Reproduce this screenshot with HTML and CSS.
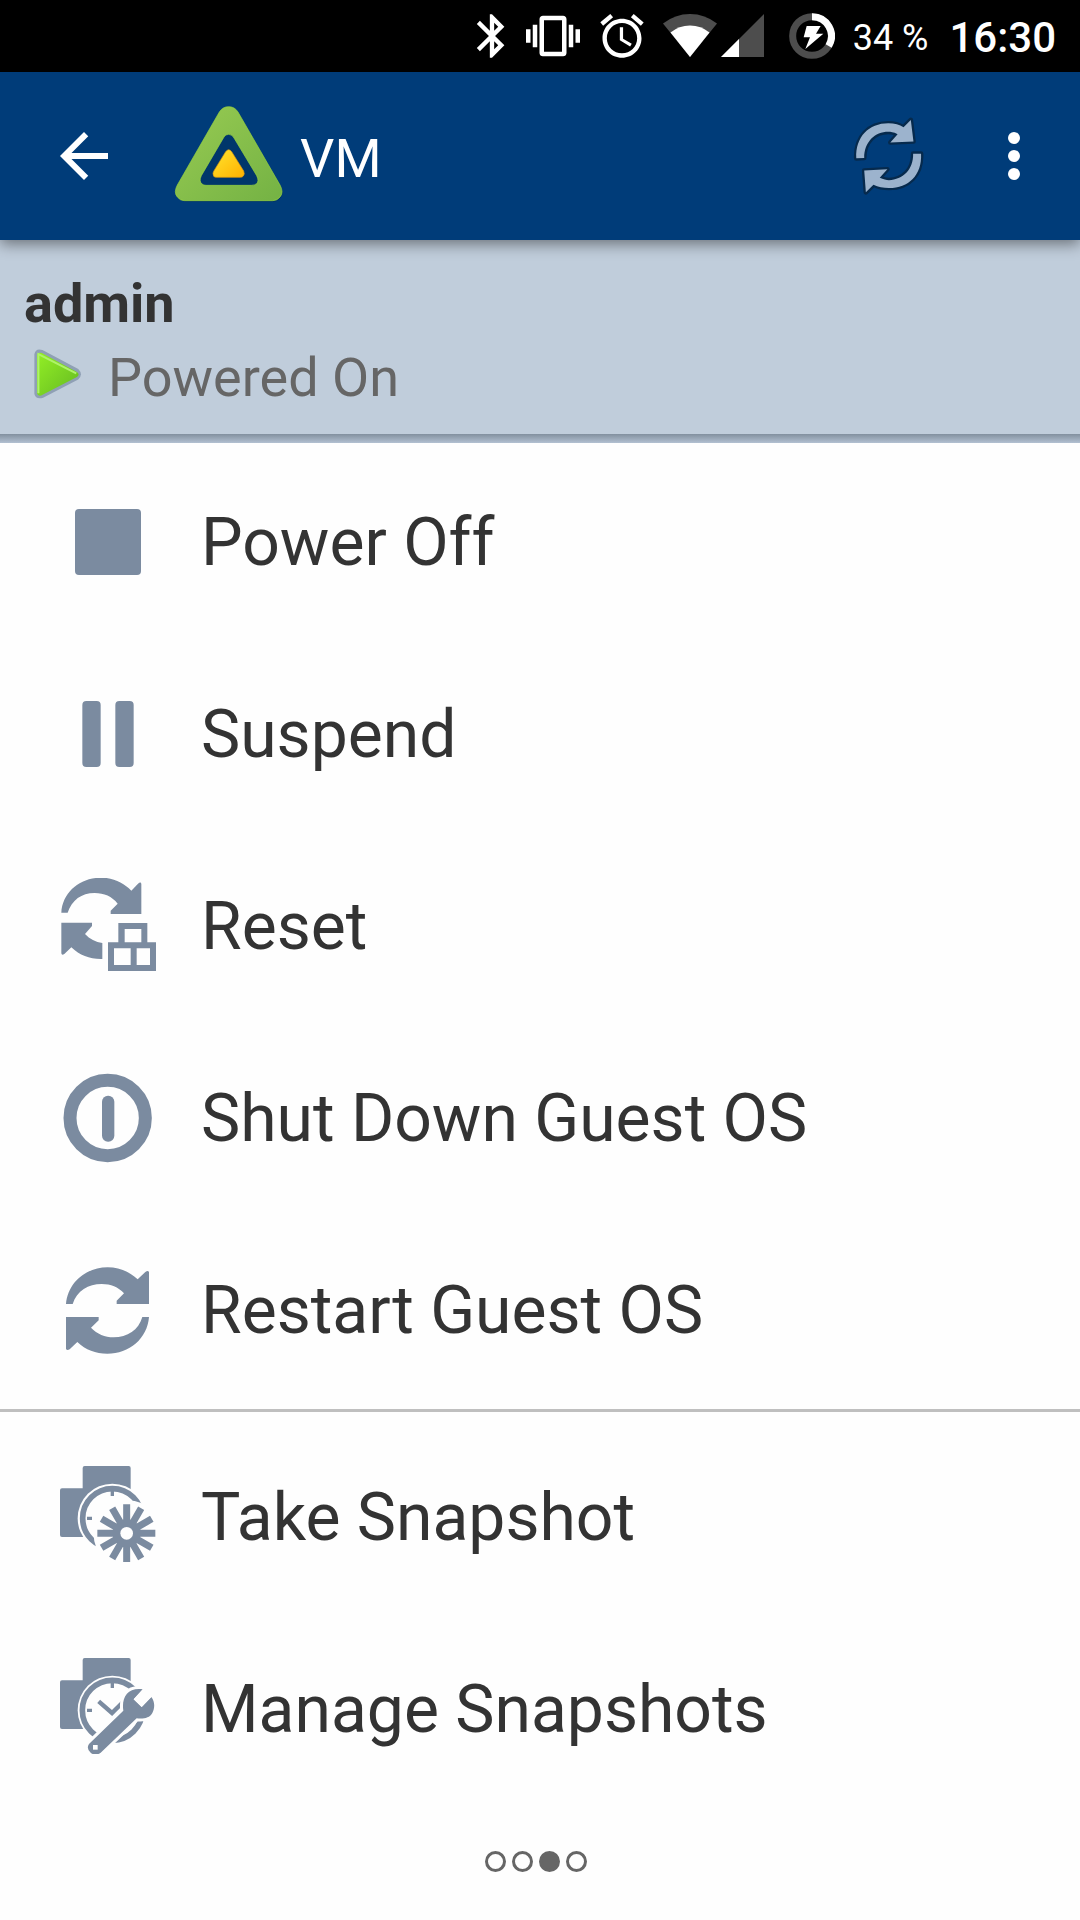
FILE: index.html
```html
<!DOCTYPE html>
<html lang="en">
<head>
<meta charset="utf-8">
<meta name="viewport" content="width=device-width, initial-scale=1">
<title>VM</title>
<link rel="stylesheet" href="styles.css">
</head>
<body>
<div class="statusbar">
  <svg class="status-icon bluetooth" viewBox="0 0 24 24" aria-hidden="true"><path d="M17.71 7.71L12 2h-1v7.59L6.41 5 5 6.41 10.59 12 5 17.59 6.41 19 11 14.41V22h1l5.71-5.71-4.3-4.29 4.3-4.29zM13 5.83l1.88 1.88L13 9.59V5.83zm1.88 10.46L13 18.17v-3.76l1.88 1.88z"/></svg>
  <svg class="status-icon vibrate" viewBox="0 0 24 24" aria-hidden="true"><path d="M0 15h2V9H0v6zm3 2h2V7H3v10zm19-8v6h2V9h-2zm-3 8h2V7h-2v10zM16.5 3h-9C6.67 3 6 3.67 6 4.5v15c0 .83.67 1.5 1.5 1.5h9c.83 0 1.5-.67 1.5-1.5v-15c0-.83-.67-1.5-1.5-1.5zM16 19H8V5h8v14z"/></svg>
  <svg class="status-icon alarm" viewBox="0 0 24 24" aria-hidden="true"><path d="M22 5.72l-4.6-3.86-1.29 1.53 4.6 3.86L22 5.72zM7.88 3.39L6.6 1.86 2 5.71l1.29 1.53 4.59-3.85zM12.5 8H11v6l4.75 2.85.75-1.23-4-2.37V8zM12 4c-4.97 0-9 4.03-9 9s4.02 9 9 9c4.97 0 9-4.03 9-9s-4.03-9-9-9zm0 16c-3.87 0-7-3.13-7-7s3.13-7 7-7 7 3.13 7 7-3.13 7-7 7z"/></svg>
  <svg class="status-icon wifi" viewBox="0 0 54 54" aria-hidden="true"><path class="dim" d="M27 48L0 14.500Q12 5 27 5T54 14.500Z"/><path d="M27 48L7.500 23.500Q16 16.500 27 16.500T46.500 23.500Z"/></svg>
  <svg class="status-icon cell" viewBox="0 0 44 54" aria-hidden="true"><path class="dim" d="M0 48H43V5Z"/><path d="M0 48H18V30Z"/></svg>
  <svg class="status-icon battery" viewBox="0 0 138 138" aria-hidden="true"><circle class="ring" cx="69" cy="69" r="58"/><path class="ring charge" d="M69 11A58 58 0 0 1 119 99"/><path d="M53 39H95L81 62H103L49 108 63 73H44Z"/></svg>
  <span class="percent">34 %</span>
  <span class="clock">16:30</span>
</div>

<header class="appbar">
  <button class="bar-button back" type="button" aria-label="Back"><svg viewBox="0 0 24 24"><path fill="#fff" d="M20 11H7.83l5.59-5.59L12 4l-8 8 8 8 1.410-1.410L7.830 13H20v-2z"/></svg></button>
  <svg class="logo" viewBox="400 44 330 294" aria-hidden="true">
    <defs>
      <linearGradient id="green" x1="0" y1="0" x2="1" y2="1"><stop offset="0" stop-color="#98cb52"/><stop offset="1" stop-color="#74b244"/></linearGradient>
      <linearGradient id="gold" x1="0" y1="0" x2="1" y2="1"><stop offset="0" stop-color="#ffe52e"/><stop offset="1" stop-color="#ffb000"/></linearGradient>
    </defs>
    <path fill="#002f5e" opacity=".5" d="M540 64Q564 38 592 64L720 288Q736 320 704 335H434Q398 320 408 288Z"/>
    <path fill="url(#green)" stroke="#9ad63c" stroke-width="2" fill-rule="evenodd" d="M536 65Q546 49 564 49T592 65L718 284Q730 306 718 320 710 331 696 331H432Q418 331 410 320 398 306 410 284ZM550 140L482 256Q474 273 484 281 489 285 496 285H632Q642 285 648 280 656 272 648 256L580 143Q574 132 564 132T550 140Z"/>
    <path fill="url(#gold)" stroke="#d99a10" stroke-width="2" d="M555 184Q564 172 573 184L609 242Q613 251 608 257 605 261 599 261H527Q517 261 517 250 517 246 520 241Z"/>
  </svg>
  <h1 class="title">VM</h1>
  <button class="bar-button refresh" type="button" aria-label="Refresh"><svg viewBox="99 52 216 236">
    <g fill="#9cb3cd" stroke="#062a4d" stroke-width="14" stroke-linejoin="round" paint-order="stroke"><path d="M108 177C105 112 146 71 205 71 224 71 239 76 251 83L273 61 281 126 211 129 233 104C220 98 212 97 205 97 164 97 132 128 132 176Z"/><path d="M304 163C307 228 266 267 207 267 190 267 174 264 160 257L137 280 132 214 202 210 179 236C190 241 199 243 207 243 249 241 281 211 280 163Z"/></g></svg></button>
  <button class="bar-button more" type="button" aria-label="More options"><svg viewBox="0 0 12 48"><g fill="#fff"><circle cx="6" cy="6" r="6"/><circle cx="6" cy="24" r="6"/><circle cx="6" cy="42" r="6"/></g></svg></button>
</header>

<main>
  <section class="summary">
    <h2 class="name">admin</h2>
    <p class="state"><svg class="play" viewBox="100 262 148 154" aria-hidden="true">
      <defs><linearGradient id="play" x1="0" y1="0" x2="1" y2="1"><stop offset="0" stop-color="#93ef25"/><stop offset="1" stop-color="#65ba22"/></linearGradient></defs>
      <path fill="#8fa0b5" d="M104 280Q108 261 128 268L234 324Q250 340 234 355L130 409Q108 415 104 398Z"/><path fill="url(#play)" d="M112 282Q115 273 126 277L230 333Q240 341 230 348L124 403Q113 405 112 396Z"/><path fill="none" stroke="#aef36a" stroke-width="6" d="M116 396V280L228 337"/></svg>Powered On</p>
  </section>

  <ul class="actions">
    <li><button class="action" type="button"><svg viewBox="60 42 288 288"><rect x="105" y="87" width="198" height="198" rx="12"/></svg>Power Off</button></li>
    <li><button class="action" type="button"><svg viewBox="60 618 288 288"><rect x="127" y="663" width="55" height="198" rx="12"/><rect x="226" y="663" width="55" height="198" rx="12"/></svg>Suspend</button></li>
    <li><button class="action" type="button"><svg viewBox="60 54 288 288"><path d="M64 158C68 96 120 53 184 53 222 53 252 70 274 92L294 71Q303 64 304 72V162H212V152L233 131C216 109 192 99 164 99 124 99 96 120 83 158ZM64 188H156V198L135 222C149 237 167 246 187 249V297C150 298 120 287 94 262L73 282Q65 287 64 280ZM235 189H322V247H348V333H204V247H235ZM254 207V247H304V207ZM222 265V315H272V265ZM290 265V315H330V265Z" fill-rule="evenodd"/></svg>Reset</button></li>
    <li><button class="action" type="button"><svg viewBox="60 60 288 288"><circle class="line" cx="203" cy="204" r="113" stroke-width="39"/><rect x="186" y="137" width="37" height="138" rx="18"/></svg>Shut Down Guest OS</button></li>
    <li><button class="action" type="button"><svg viewBox="60 636 288 288"><path d="M78 762C84 697 138 652 203 652 238 652 269 665 293 688L316 666Q325 660 327 667V762H230V752L252 730C234 711 213 702 185 702 145 702 111 722 98 762ZM327 801C322 866 268 911 202 911 167 911 137 900 112 876L89 898Q80 903 78 896V801H176V811L153 833C172 852 194 862 221 862 262 862 296 840 307 801Z"/></svg>Restart Guest OS</button></li>
  </ul>
  <ul class="actions snapshots">
    <li><button class="action" type="button"><svg viewBox="60 48 288 288"><rect x="60" y="115" width="144" height="146" rx="6"/><rect x="128" y="48" width="144" height="146" rx="6"/><circle class="blank" cx="217" cy="205" r="104"/><circle class="line" cx="217" cy="205" r="89" stroke-width="17"/><path d="M212 123H222V138H212ZM141 200H156V210H141Z"/><circle class="blank" cx="264" cy="254" r="103"/>
      <circle cx="260" cy="250" r="42"/><path class="line" stroke-width="21" d="M172 250H346M260 163V337M216.500 174.700L303.500 325.300M303.500 174.700L216.500 325.300M184.700 206.500L335.300 293.500M335.300 206.500L184.700 293.500"/><circle class="blank" cx="260" cy="250" r="19"/></svg>Take Snapshot</button></li>
    <li><button class="action" type="button"><svg viewBox="60 54 288 288"><rect x="60" y="121" width="144" height="146" rx="6"/><rect x="128" y="54" width="144" height="146" rx="6"/><circle class="blank" cx="217" cy="211" r="104"/><circle class="line" cx="217" cy="211" r="90" stroke-width="17"/><path d="M212 129H222V144H212ZM141 206H156V216H141Z"/><path class="line" stroke-width="13" d="M176 184L216 219 250 185"/>
      <path class="halo" d="M147 312L250 212C244 172 263 142 308 148L281 178 305 201 334 171C346 186 344 207 337 219 328 235 310 237 290 235L182 338Q166 350 152 338 138 325 147 312Z"/><path class="blank" d="M281 178L309 148 328 152 334 171 305 201Z"/><rect class="blank" x="159" y="315" width="14" height="14"/></svg>Manage Snapshots</button></li>
  </ul>
</main>

<nav class="pager" aria-label="Pages">
  <button class="dot" type="button" aria-label="Page 1"></button>
  <button class="dot" type="button" aria-label="Page 2"></button>
  <button class="dot current" type="button" aria-label="Page 3" aria-current="page"></button>
  <button class="dot" type="button" aria-label="Page 4"></button>
</nav>
</body>
</html>
```
FILE: styles.css
```css
* {
  box-sizing: border-box;
}

body {
  margin: 0;
  min-height: 100vh;
  display: flex;
  flex-direction: column;
  background: #fefefe;
  color: #333;
  font-family: Roboto, "Liberation Sans", sans-serif;
}

h1, h2, p, ul {
  margin: 0;
  padding: 0;
}

ul {
  list-style: none;
}

button {
  margin: 0;
  padding: 0;
  border: 0;
  background: none;
  color: inherit;
  font: inherit;
  cursor: pointer;
}

svg {
  display: block;
  flex: none;
}

/* System status bar */
.statusbar {
  height: 72px;
  padding-right: 24px;
  display: flex;
  align-items: center;
  justify-content: flex-end;
  background: #000;
  color: #fff;
}

.status-icon {
  height: 54px;
  fill: #fff;
}

.status-icon .dim {
  fill: #4d4d4d;
}

.bluetooth,
.alarm {
  width: 52px;
  height: 52px;
}

.vibrate {
  width: 54px;
  margin: 0 16px 0 8px;
}

.wifi {
  width: 54px;
  margin: 0 4px 0 15px;
}

.cell {
  width: 44px;
  margin-right: 24px;
}

.battery {
  width: 46px;
  height: 46px;
}

.ring {
  fill: none;
  stroke: #4d4d4d;
  stroke-width: 21;
}

.charge {
  stroke: #fff;
}

.percent {
  margin: 3px 21px 0 18px;
  font-size: 36px;
}

.clock {
  margin-top: 2px;
  font-size: 42px;
  font-weight: 500;
}

/* App bar */
.appbar {
  position: relative;
  z-index: 1;
  height: 168px;
  padding: 0 60px 0 48px;
  display: flex;
  align-items: center;
  background: #003c79;
  color: #fff;
  box-shadow: 0 4px 14px rgba(0, 0, 0, 0.45);
}

.back svg {
  width: 72px;
  height: 72px;
}

.logo {
  width: 110px;
  height: 98px;
  margin: 0 16px 4px 54px;
}

.title {
  flex: 1;
  padding-top: 6px;
  font-size: 54px;
  font-weight: 400;
  line-height: 64px;
}

.refresh svg {
  width: 72px;
  height: 78px;
}

.more {
  margin-left: 83px;
}

.more svg {
  width: 12px;
  height: 48px;
}

/* Machine summary */
.summary {
  padding: 28px 24px 0;
  background: #c0cddb;
  font-size: 54px;
  line-height: 72px;
}

.summary::after {
  content: "";
  display: block;
  height: 9px;
  margin: 20px -24px 0;
  background: linear-gradient(#82909f, #b2c0d1);
}

.name {
  font-size: 54px;
  font-weight: 700;
}

.state {
  padding-top: 2px;
  display: flex;
  align-items: center;
  gap: 25px;
  color: #666;
}

.play {
  width: 50px;
  height: 52px;
  margin: 0 0 8px 9px;
}

/* Action list */
.actions {
  padding: 3px 0;
}

.snapshots {
  padding: 9px 0 3px;
  border-top: 3px solid #bfbfbf;
}

.action {
  width: 100%;
  height: 192px;
  padding: 0 60px;
  display: flex;
  align-items: center;
  gap: 45px;
  font-size: 66px;
  text-align: left;
}

.action svg {
  width: 96px;
  height: 96px;
  fill: #7b8ba0;
}

.snapshots .action svg {
  margin-bottom: 6px;
}

.action .line {
  fill: none;
  stroke: #7b8ba0;
}

.action .blank {
  fill: #fefefe;
}

.action .halo {
  stroke: #fefefe;
  stroke-width: 18;
  paint-order: stroke;
}

/* Page indicator */
.pager {
  margin-top: auto;
  padding: 0 9px 48px 0;
  display: flex;
  justify-content: center;
  gap: 6px;
}

.dot {
  width: 21px;
  height: 21px;
  border: 3px solid #666;
  border-radius: 50%;
}

.current {
  background: #666;
}
```
